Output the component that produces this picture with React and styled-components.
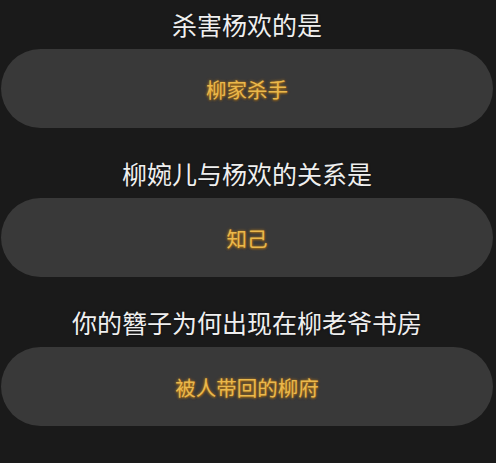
import React from "react";
import styled, { createGlobalStyle } from "styled-components";

const GlobalStyle = createGlobalStyle`
  html, body {
    margin: 0;
    padding: 0;
    background: #1a1a1a;
  }
  body {
    font-family: "Noto Sans CJK SC", "Noto Sans", sans-serif;
  }
`;

const Wrapper = styled.div`
  width: 496px;
  height: 463px;
  box-sizing: border-box;
  padding: 9px 3px 0 1px;
  display: flex;
  flex-direction: column;
  gap: 30px;
  background: #1a1a1a;
  overflow: hidden;
`;

const Block = styled.div`
  display: flex;
  flex-direction: column;
  gap: 10px;
`;

const Question = styled.div`
  height: 30px;
  line-height: 30px;
  font-size: 25px;
  color: #efefef;
  text-align: center;
  text-shadow: 0 0 2px rgba(0, 0, 0, 0.6);
  white-space: nowrap;
`;

const Answer = styled.div`
  height: 79px;
  border-radius: 40px;
  background: #393939;
  display: flex;
  align-items: center;
  justify-content: center;
  font-size: 20.5px;
  color: #eab84c;
  text-shadow: 0 0 3px rgba(214, 140, 20, 0.9), 0 1px 2px rgba(180, 110, 10, 0.6);
`;

const items = [
  { q: "杀害杨欢的是", a: "柳家杀手" },
  { q: "柳婉儿与杨欢的关系是", a: "知己" },
  { q: "你的簪子为何出现在柳老爷书房", a: "被人带回的柳府" },
];

const App = () => {
  return (
    <>
      <GlobalStyle />
      <Wrapper>
        {items.map((item) => (
          <Block key={item.q}>
            <Question>{item.q}</Question>
            <Answer>{item.a}</Answer>
          </Block>
        ))}
      </Wrapper>
    </>
  );
};

export default App;
